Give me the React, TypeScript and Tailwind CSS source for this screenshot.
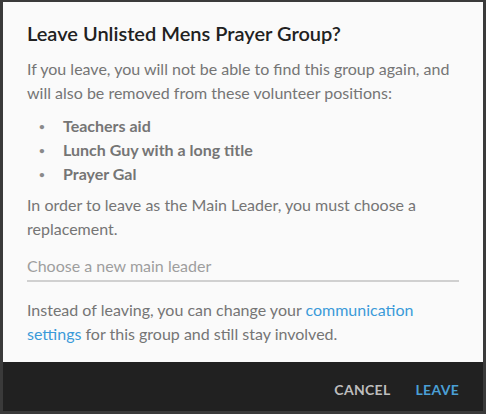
import React from "react";

export default function App() {
  const items = ["Teachers aid", "Lunch Guy with a long title", "Prayer Gal"];
  return (
    <div
      className="w-[486px] h-[414px] bg-[#3a3a3a] pt-[2px] px-[3px] pb-[3px] flex flex-col"
      style={{ fontFamily: "Lato, 'Open Sans', sans-serif" }}
    >
      <div className="bg-[#fafafa] h-[360px] px-[24px] pt-[17px]">
        <h1 className="text-[20px] leading-[28px] font-semibold text-[#212121]">
          Leave Unlisted Mens Prayer Group?
        </h1>
        <p className="mt-[10px] text-[16px] leading-[24px] text-[#757575]">
          If you leave, you will not be able to find this group again, and will also be removed from these volunteer positions:
        </p>
        <ul className="mt-[9px] text-[16px] leading-[24px] text-[#757575] font-bold">
          {items.map((t) => (
            <li key={t} className="flex items-center">
              <span className="w-[36px] pl-[12px] text-[10px] text-[#8a8a8a]">•</span>
              <span>{t}</span>
            </li>
          ))}
        </ul>
        <p className="mt-[7px] text-[16px] leading-[24px] text-[#757575]">
          In order to leave as the Main Leader, you must choose a replacement.
        </p>
        <div className="mt-[13px] border-b-2 border-[#d0d0d0] pb-[2px] text-[16px] leading-[24px] text-[#9e9e9e]">
          Choose a new main leader
        </div>
        <div className="mt-[16px] text-[16px] leading-[24px] text-[#757575]">
          <div>
            Instead of leaving, you can change your <a className="text-[#3a9ad9]">communication</a>
          </div>
          <div>
            <a className="text-[#3a9ad9]">settings</a> for this group and still stay involved.
          </div>
        </div>
      </div>
      <div className="bg-[#212121] flex-1 flex items-center justify-end pr-[24px] pt-[5px] gap-[25px] text-[14px] font-bold tracking-[0.3px]">
        <span className="text-[#bdbdbd]">CANCEL</span>
        <span className="text-[#4a9fd5]">LEAVE</span>
      </div>
    </div>
  );
}
